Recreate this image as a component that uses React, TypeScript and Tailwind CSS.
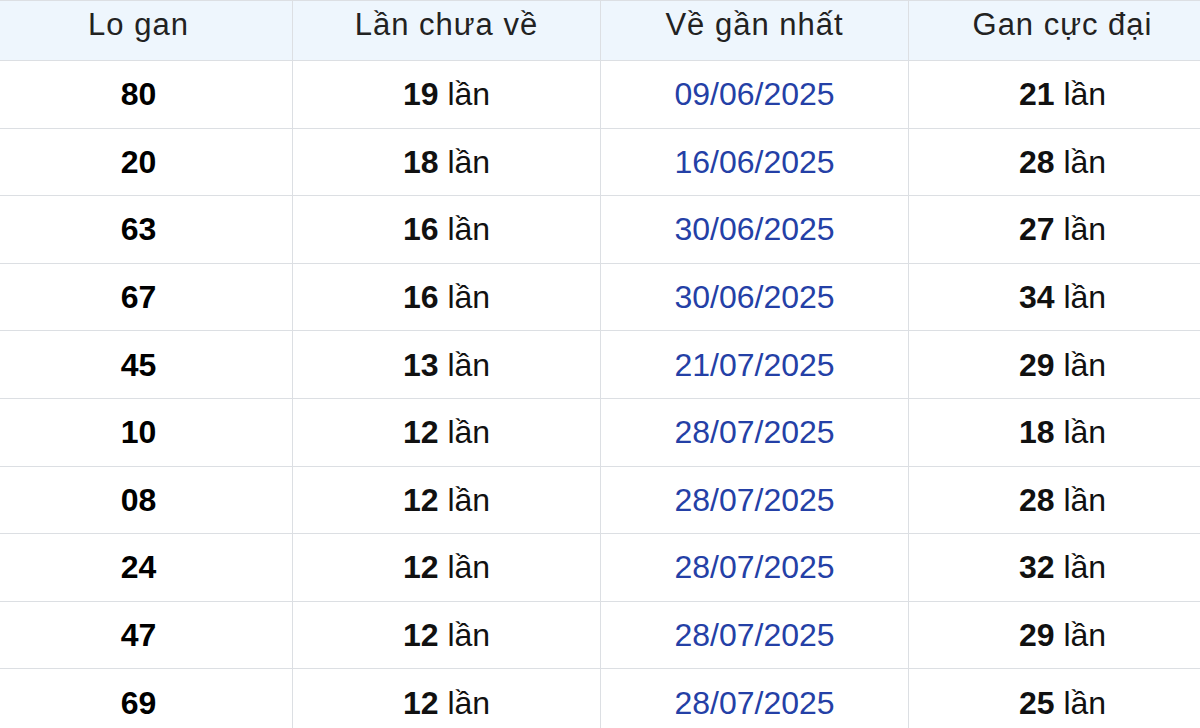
import React from 'react';

const rows: [string, string, string, string][] = [
  ['80', '19', '09/06/2025', '21'],
  ['20', '18', '16/06/2025', '28'],
  ['63', '16', '30/06/2025', '27'],
  ['67', '16', '30/06/2025', '34'],
  ['45', '13', '21/07/2025', '29'],
  ['10', '12', '28/07/2025', '18'],
  ['08', '12', '28/07/2025', '28'],
  ['24', '12', '28/07/2025', '32'],
  ['47', '12', '28/07/2025', '29'],
  ['69', '12', '28/07/2025', '25'],
];

const headers = ['Lo gan', 'Lần chưa về', 'Về gần nhất', 'Gan cực đại'];

export default function App() {
  return (
    <div className="w-[1200px] h-[728px] overflow-hidden bg-white" style={{ fontFamily: '"Liberation Sans", Arial, sans-serif' }}>
      <table className="ml-[-16px] w-[1233px] table-fixed border-collapse">
        <thead>
          <tr className="h-[60px] bg-[#eef6fd]">
            {headers.map((h) => (
              <th key={h} className="border border-[#dcdfe3] pb-[10px] text-[31px] font-normal text-[#222] tracking-[1px]">
                {h}
              </th>
            ))}
          </tr>
        </thead>
        <tbody>
          {rows.map(([lo, chua, date, max], i) => (
            <tr key={i} className="h-[67.6px]">
              <td className="border border-[#dcdfe3] text-center text-[32px] font-bold text-black">{lo}</td>
              <td className="border border-[#dcdfe3] text-center text-[32px] text-[#111]">
                <b>{chua}</b> lần
              </td>
              <td className="border border-[#dcdfe3] text-center text-[32px] text-[#2440a6]">{date}</td>
              <td className="border border-[#dcdfe3] text-center text-[32px] text-[#111]">
                <b>{max}</b> lần
              </td>
            </tr>
          ))}
        </tbody>
      </table>
    </div>
  );
}
